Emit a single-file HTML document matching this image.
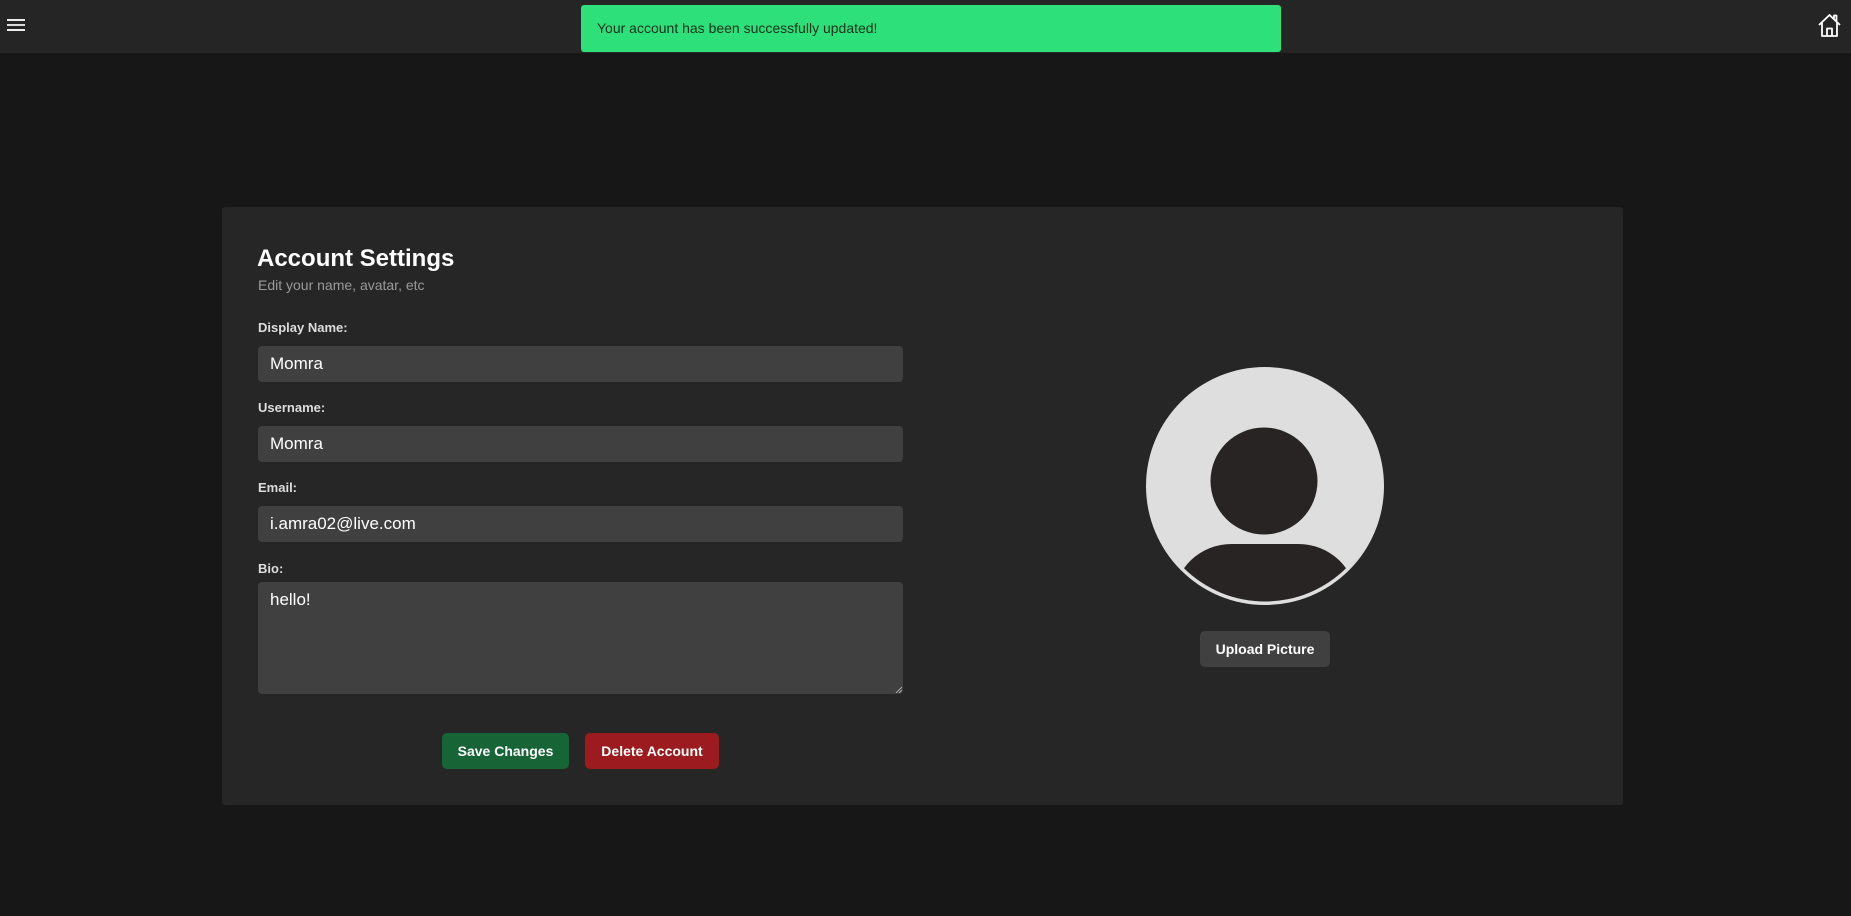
<!DOCTYPE html>
<html><head><meta charset="utf-8"><style>
*{box-sizing:border-box;margin:0;padding:0}
html,body{width:1851px;height:916px;overflow:hidden;background:#171717;font-family:"Liberation Sans",Arial,sans-serif}
.hdr{position:absolute;left:0;top:0;width:1851px;height:53px;background:#252525}
.toast{position:absolute;left:581px;top:5px;width:700px;height:47px;background:#2ee07a;border-radius:3px;color:#14301c;font-size:14px;line-height:47px;padding-left:16px}
.card{position:absolute;left:222px;top:207px;width:1401px;height:598px;background:#262626;border-radius:3px}
.abs{position:absolute}
h1{position:absolute;left:257px;top:245px;font-size:24px;color:#fff;font-weight:bold}
.sub{position:absolute;left:258px;top:277px;font-size:14px;color:#9a9a9a}
.lbl{position:absolute;left:258px;font-size:13px;font-weight:bold;color:#ddd}
.inp{position:absolute;left:258px;width:645px;height:36px;background:#404040;border-radius:4px;color:#fff;font-size:17px;padding-left:12px;line-height:36px}
.btn{position:absolute;height:36px;border-radius:5px;color:#fff;font-size:14px;font-weight:bold;text-align:center;line-height:36px}
</style></head><body>
<div class="hdr"></div>
<svg class="abs" style="left:7px;top:18px" width="18" height="14"><rect x="0" y="1" width="18" height="2" fill="#eee"/><rect x="0" y="6" width="18" height="2" fill="#ddd"/><rect x="0" y="11" width="18" height="2" fill="#eee"/></svg>
<svg class="abs" style="left:1817px;top:13px" width="25" height="25" viewBox="0 0 25 25"><path d="M2 12 L12.5 2 L23 12 M5 9.5 V23 H20 V9.5 M10 23 V15.5 H15 V23 M17 5.5 V2.5 H19.5 V8" fill="none" stroke="#fff" stroke-width="1.8" stroke-linejoin="round"/></svg>
<div class="toast">Your account has been successfully updated!</div>
<div class="card"></div>
<h1>Account Settings</h1>
<div class="sub">Edit your name, avatar, etc</div>
<div class="lbl" style="top:320px">Display Name:</div>
<div class="inp" style="top:346px">Momra</div>
<div class="lbl" style="top:400px">Username:</div>
<div class="inp" style="top:426px">Momra</div>
<div class="lbl" style="top:480px">Email:</div>
<div class="inp" style="top:506px">i.amra02@live.com</div>
<div class="lbl" style="top:561px">Bio:</div>
<div class="inp" style="top:582px;height:112px;line-height:normal;padding-top:8px">hello!</div>
<svg class="abs" style="left:895px;top:686px" width="7" height="7"><path d="M1 7 L7 1 M4 7 L7 4" stroke="#aaa" stroke-width="1"/></svg>
<div class="btn" style="left:442px;top:733px;width:127px;background:#176537">Save Changes</div>
<div class="btn" style="left:585px;top:733px;width:134px;background:#9b1b1e">Delete Account</div>
<svg class="abs" style="left:1146px;top:367px" width="238" height="238" viewBox="0 0 238 238">
<defs><clipPath id="c"><circle cx="119" cy="119" r="115.5"/></clipPath></defs>
<circle cx="119" cy="119" r="119" fill="#dedede"/>
<circle cx="118" cy="114" r="53.5" fill="#282424"/>
<rect x="28" y="177" width="182" height="110" rx="58" fill="#282424" clip-path="url(#c)"/>
</svg>
<div class="btn" style="left:1200px;top:631px;width:130px;height:36px;background:#404040">Upload Picture</div>
</body></html>
